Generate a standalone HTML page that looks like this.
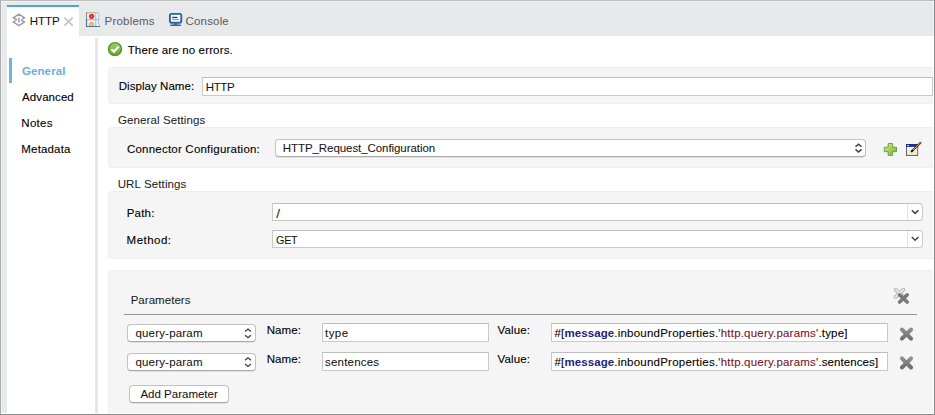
<!DOCTYPE html>
<html><head><meta charset="utf-8">
<style>
html,body{margin:0;padding:0;}
body{width:935px;height:415px;overflow:hidden;background:#fff;position:relative;font-family:"Liberation Sans",sans-serif;font-size:11.5px;color:#000;}
.abs{position:absolute;}
.t{position:absolute;white-space:nowrap;line-height:14px;height:14px;-webkit-text-stroke:0.1px;}
.lt{-webkit-text-stroke:0.06px;color:#141414;}
.panel{position:absolute;background:#f5f5f5;border-radius:4px 0 0 4px;box-sizing:border-box;border:1px solid #eeeeee;border-right:none;}
.inp{position:absolute;background:#fff;border:1px solid #c9c9c9;border-top-color:#bdbdbd;box-sizing:border-box;}
.sel{position:absolute;background:#fff;border:1px solid #c2c2c2;border-bottom-color:#a9a9a9;border-radius:4px;box-sizing:border-box;box-shadow:0 0.5px 0.5px rgba(0,0,0,.15);}
</style></head><body>
<!-- window chrome -->
<div class="abs" style="left:0;top:0;width:935px;height:36px;background:#e8e9eb;"></div>
<div class="abs" style="left:0;top:36px;width:7px;height:379px;background:#e8e9eb;"></div>
<div class="abs" style="left:7px;top:5px;width:72px;height:31px;background:#fff;"></div>
<div class="abs" style="left:7px;top:5px;width:72px;height:2px;background:#4ea6d4;"></div>
<div class="abs" style="left:95px;top:38px;width:3px;height:376px;background:#e6e7e8;"></div>
<!-- tabs -->
<span class="t lt" id="t1" style="left:29.75px;top:14px;letter-spacing:-0.074px;">HTTP</span>
<span class="t" id="t2" style="left:104.59px;top:14px;color:#5e5e5e;-webkit-text-stroke:0.05px;letter-spacing:0.203px;">Problems</span>
<span class="t" id="t3" style="left:185.50px;top:14px;color:#5e5e5e;-webkit-text-stroke:0.05px;letter-spacing:0.178px;">Console</span>

<!-- sidebar -->
<div class="abs" style="left:9px;top:58px;width:3px;height:25px;background:#6db3da;"></div>
<span class="t" id="s1" style="left:21.9px;top:64px;color:#66b1db;font-weight:bold;letter-spacing:0.12px;-webkit-text-stroke:0;">General</span>
<span class="t" id="s2" style="left:22.11px;top:90px;letter-spacing:0.069px;">Advanced</span>
<span class="t" id="s3" style="left:21.34px;top:116px;letter-spacing:0.253px;">Notes</span>
<span class="t" id="s4" style="left:21.34px;top:142px;letter-spacing:0.162px;">Metadata</span>

<!-- status -->
<span class="t" id="m1" style="left:127.68px;top:43px;letter-spacing:0.147px;">There are no errors.</span>

<!-- panel 1 -->
<div class="panel" style="left:108px;top:67px;width:825px;height:37px;"></div>
<span class="t" id="m2" style="left:118.73px;top:79px;letter-spacing:0.054px;">Display Name:</span>
<div class="inp" style="left:202px;top:77px;width:731px;height:19px;"></div>
<span class="t lt" id="m3" style="left:205.70px;top:80px;letter-spacing:-0.330px;">HTTP</span>

<span class="t" id="m4" style="-webkit-text-stroke:0.05px;color:#1c1c1c;left:117.9px;top:113px;letter-spacing:0.115px;">General Settings</span>
<!-- panel 2 -->
<div class="panel" style="left:108px;top:127px;width:825px;height:41px;"></div>
<span class="t" id="m5" style="left:126.95px;top:142px;letter-spacing:0.218px;">Connector Configuration:</span>
<div class="sel" style="left:275px;top:139px;width:591px;height:18px;"></div>
<span class="t lt" id="m6" style="left:282.8px;top:141px;letter-spacing:-0.07px;">HTTP_Request_Configuration</span>

<span class="t" id="m7" style="-webkit-text-stroke:0.05px;color:#1c1c1c;left:117.70px;top:177px;letter-spacing:0.121px;">URL Settings</span>
<!-- panel 3 -->
<div class="panel" style="left:108px;top:191px;width:825px;height:68px;"></div>
<span class="t" id="m8" style="left:126.66px;top:206px;letter-spacing:0.219px;">Path:</span>
<div class="inp" style="left:272px;top:203px;width:651px;height:18px;border-radius:0 4px 4px 0;"></div>
<span class="t lt" id="m9" style="left:276.2px;top:207px;font-size:13.5px;">/</span>
<span class="t" id="m10" style="left:126.61px;top:233px;letter-spacing:0.473px;">Method:</span>
<div class="inp" style="left:272px;top:230px;width:651px;height:18px;border-radius:0 4px 4px 0;"></div>
<span class="t lt" id="m11" style="left:276.1px;top:233px;font-size:10.8px;letter-spacing:-0.35px;">GET</span>

<!-- panel 4 -->
<div class="panel" style="left:108px;top:270px;width:825px;height:150px;"></div>
<span class="t" id="m12" style="-webkit-text-stroke:0.05px;color:#1c1c1c;left:130.64px;top:293px;letter-spacing:0.043px;">Parameters</span>
<div class="abs" style="left:124px;top:314px;width:793px;height:1px;background:#939393;"></div>

<div class="sel" style="left:127px;top:324px;width:129px;height:18px;"></div>
<span class="t lt" id="m13" style="left:135.4px;top:326px;letter-spacing:0.19px;">query-param</span>
<span class="t" id="m14" style="left:266.69px;top:323px;letter-spacing:0.071px;">Name:</span>
<div class="inp" style="left:322px;top:323px;width:167px;height:19px;"></div>
<span class="t lt" id="m15" style="left:325.00px;top:326px;letter-spacing:0.450px;">type</span>
<span class="t" id="m16" style="left:497.53px;top:322.7px;letter-spacing:0.144px;">Value:</span>
<div class="inp" style="left:551px;top:323px;width:337px;height:19px;"></div>
<span class="t" id="m17" style="left:554.6px;top:326px;"><span style="letter-spacing:0.09px">#[<b style="color:#1c237e;-webkit-text-stroke:0;">message</b></span><span class="sa" style="letter-spacing:0.23px">.inboundProperties.</span><span class="sb" style="color:#7a1424;letter-spacing:0.2px">'http.query.params'</span><span class="sc" style="letter-spacing:0.2px">.type]</span></span>

<div class="sel" style="left:127px;top:353px;width:129px;height:18px;"></div>
<span class="t lt" id="m18" style="left:135.4px;top:355px;letter-spacing:0.19px;">query-param</span>
<span class="t" id="m19" style="left:266.69px;top:352px;letter-spacing:0.071px;">Name:</span>
<div class="inp" style="left:322px;top:352px;width:167px;height:19px;"></div>
<span class="t lt" id="m20" style="left:325.00px;top:355px;letter-spacing:0.200px;">sentences</span>
<span class="t" id="m21" style="left:497.53px;top:351.5px;letter-spacing:0.144px;">Value:</span>
<div class="inp" style="left:551px;top:352px;width:337px;height:19px;"></div>
<span class="t" id="m22" style="left:554.6px;top:355px;"><span style="letter-spacing:0.09px">#[<b style="color:#1c237e;-webkit-text-stroke:0;">message</b></span><span class="sa" style="letter-spacing:0.23px">.inboundProperties.</span><span class="sb" style="color:#7a1424;letter-spacing:0.2px">'http.query.params'</span><span class="sc" style="letter-spacing:0.09px">.sentences]</span></span>

<div class="sel" style="left:129px;top:385.4px;width:100px;height:17.4px;"></div>
<span class="t lt" id="m23" style="left:140.41px;top:387px;letter-spacing:0.004px;">Add Parameter</span>

<!-- ICONS -->
<svg class="abs" style="left:0;top:0;" width="935" height="415" viewBox="0 0 935 415">
<defs>
<linearGradient id="gchk" x1="0" y1="0" x2="0" y2="1"><stop offset="0" stop-color="#a3d365"/><stop offset="1" stop-color="#62a52e"/></linearGradient>
<linearGradient id="gplus" x1="0" y1="0" x2="1" y2="1"><stop offset="0" stop-color="#e3ea7a"/><stop offset="1" stop-color="#6fb043"/></linearGradient>
<linearGradient id="gwin" x1="0" y1="0" x2="0" y2="1"><stop offset="0" stop-color="#ffffff"/><stop offset="1" stop-color="#e6e2c8"/></linearGradient>
<linearGradient id="gx" x1="0" y1="0" x2="0" y2="1"><stop offset="0" stop-color="#8e8e8e"/><stop offset="1" stop-color="#707070"/></linearGradient>
</defs>
<!-- tab icon -->
<g fill="none" stroke="#9b9b9b" stroke-width="1.5" stroke-linejoin="miter">
<path d="M22.2 19.1 L24.4 17.7 L18.9 14.1 L13.4 17.7 L17 20"/>
<path d="M15.6 20.7 L13.4 22.1 L18.9 25.7 L24.4 22.1 L20.8 19.8"/>
<path d="M18.9 17.4 L18.9 22.4" stroke-width="1.6" stroke="#a5a5a5"/>
</g>
<!-- tab close -->
<path d="M64.4 17.6 L72.7 25.6 M72.7 17.6 L64.4 25.6" stroke="#c4c4c4" stroke-width="1.7" fill="none"/>
<!-- problems icon -->
<g>
<path d="M86.5 12.8 L98.2 12.8 Q100 16 98.4 19.5 Q97.6 23 99.8 26.4 L86.5 26.4 Z" fill="#e6eff9" stroke="none"/>
<path d="M96.3 13 L98.2 13 Q99.8 16 98.3 19.5 Q97.6 23 99.4 26 L96.3 26 Z" fill="#f3f7fc" stroke="none"/>
<path d="M86.2 12.7 L98 12.7" stroke="#bfb088" stroke-width="1" fill="none"/>
<path d="M86.5 12.3 L86.5 19" stroke="#9a9078" stroke-width="1.1" fill="none"/>
<path d="M86.5 19 L86.5 26.5 L100 26.5" stroke="#5b6b8e" stroke-width="1.1" fill="none"/>
<path d="M98.2 12.8 Q100 16 98.4 19.5 Q97.6 23 99.8 26.4" stroke="#a9bad3" stroke-width="0.9" fill="none"/>
<path d="M87 19.6 L98.3 19.6 M95.8 13.2 L95.8 26" stroke="#9bbbe4" stroke-width="1" fill="none"/>
<circle cx="91.6" cy="16.3" r="2.6" fill="#de2a32"/>
<circle cx="91.6" cy="16.3" r="1.1" fill="#e8505a"/>
<path d="M89.1 25.8 L89.1 23.9 Q91.6 19.4 94.1 23.9 L94.1 25.8 Z" fill="#f7a838"/>
<path d="M90.4 25.3 L90.4 24.2 Q91.6 22.2 92.8 24.2 L92.8 25.3 Z" fill="#fbc56a"/>
</g>
<!-- console icon -->
<g>
<rect x="169.9" y="13.9" width="11.4" height="8.8" rx="1.6" fill="#f4f7fb" stroke="#2f62a3" stroke-width="1.9"/>
<path d="M172.3 17.4 L177.4 17.4" stroke="#1d2b6b" stroke-width="1.1"/>
<path d="M172.3 19.4 L178.9 19.4" stroke="#6e95cf" stroke-width="1.1"/>
<rect x="173.6" y="23.4" width="4" height="1.4" fill="#2f62a3"/>
<rect x="170.2" y="24.6" width="10.8" height="1.3" rx="0.5" fill="#2f62a3"/>
</g>
<!-- check icon -->
<circle cx="115" cy="49.1" r="6.5" fill="url(#gchk)" stroke="#55942a" stroke-width="1.4"/>
<path d="M111.4 49.2 L114 51.6 L118.8 46.6" stroke="#fff" stroke-width="2.2" fill="none"/>
<!-- connector select chevrons -->
<path d="M855.5 146.8 L858.5 144.2 L861.5 146.8 M855.5 149.4 L858.5 152 L861.5 149.4" stroke="#3c3c3c" stroke-width="1.4" fill="none"/>
<!-- plus icon -->
<path d="M888.2 143.5 H892.6 V147.2 H896.5 V151.7 H892.6 V155.4 H888.2 V151.7 H884.3 V147.2 H888.2 Z" fill="url(#gplus)" stroke="#69a143" stroke-width="1" stroke-linejoin="round"/>
<!-- edit icon -->
<rect x="906.5" y="144.5" width="11.2" height="11" fill="url(#gwin)" stroke="#6a6a6a" stroke-width="1"/>
<rect x="906" y="144" width="12.2" height="2.9" fill="#1b2d9b"/>
<rect x="907.3" y="145" width="1.6" height="1" fill="#dfe6ff"/>
<path d="M920.5 142.7 L911.8 151.2" stroke="#4a2d10" stroke-width="1.9" stroke-linecap="round"/>
<path d="M920.4 142.8 L912.8 150.2" stroke="#f0a23a" stroke-width="0.9" stroke-linecap="round"/>
<path d="M912.4 150.6 L911.5 151.5" stroke="#111" stroke-width="1.5" stroke-linecap="round"/>
<!-- combo arrows -->
<path d="M907.5 204 V220" stroke="#e2e2e2" stroke-width="1"/>
<path d="M907.5 231 V247" stroke="#e2e2e2" stroke-width="1"/>
<path d="M911.8 210.2 L915.1 213.4 L918.4 210.2" stroke="#444" stroke-width="1.5" fill="none"/>
<path d="M911.8 237 L915.1 240.2 L918.4 237" stroke="#444" stroke-width="1.5" fill="none"/>
<!-- param select chevrons -->
<path d="M245.1 331.6 L248 329.1 L250.9 331.6 M245.1 335.2 L248 337.7 L250.9 335.2" stroke="#3c3c3c" stroke-width="1.3" fill="none"/>
<path d="M245.1 360.3 L248 357.8 L250.9 360.3 M245.1 363.9 L248 366.4 L250.9 363.9" stroke="#3c3c3c" stroke-width="1.3" fill="none"/>
<!-- remove all icon -->
<path d="M895.6 289.6 L903.4 296.8 M903.4 289.6 L895.6 296.8" stroke="#adadad" stroke-width="3.7" stroke-linecap="round" fill="none"/>
<path d="M895.6 289.6 L903.4 296.8 M903.4 289.6 L895.6 296.8" stroke="#e9e9e9" stroke-width="2.1" stroke-linecap="round" fill="none"/>
<path d="M899.6 294.9 L907.2 302 M907.2 294.9 L899.6 302" stroke="#777" stroke-width="3.6" stroke-linecap="round" fill="none"/>
<!-- remove icons -->
<path d="M901.9 329.5 L911.1 338.6 M911.1 329.5 L901.9 338.6" stroke="url(#gx)" stroke-width="4" stroke-linecap="round" fill="none"/>
<path d="M901.9 358.4 L911.1 367.5 M911.1 358.4 L901.9 367.5" stroke="url(#gx)" stroke-width="4" stroke-linecap="round" fill="none"/>
</svg>
<!-- borders -->
<div class="abs" style="left:0;top:1px;width:935px;height:1px;background:#f1f1f2;"></div>
<div class="abs" style="left:1px;top:0;width:1px;height:415px;background:#f1f1f2;"></div>
<div class="abs" style="left:933px;top:1px;width:1px;height:35px;background:#f1f1f2;"></div>
<div class="abs" style="left:933px;top:36px;width:1px;height:378px;background:#ffffff;"></div>
<div class="abs" style="left:0;top:413px;width:935px;height:1px;background:#ffffff;"></div>
<div class="abs" style="left:0;top:0;width:935px;height:1px;background:#bebebe;"></div>
<div class="abs" style="left:0;top:0;width:1px;height:415px;background:#ababab;"></div>
<div class="abs" style="left:934px;top:0;width:1px;height:415px;background:#8c8c8c;"></div>
<div class="abs" style="left:0;top:414px;width:935px;height:1px;background:#8a8a8a;"></div>
</body></html>
